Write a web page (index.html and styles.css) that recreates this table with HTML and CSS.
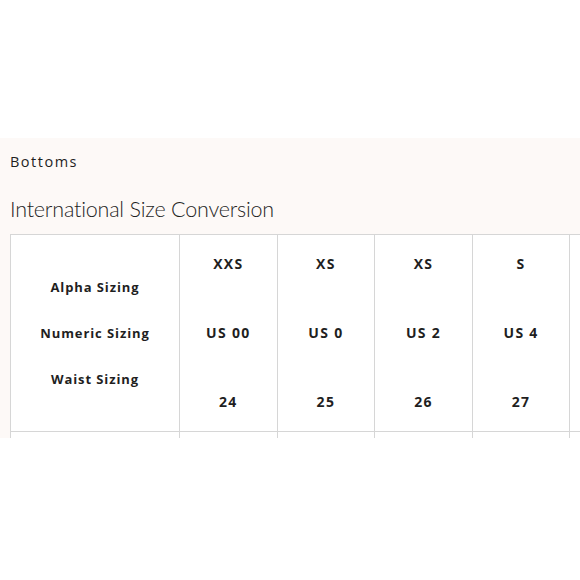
FILE: index.html
```html
<!DOCTYPE html>
<html>
<head>
<meta charset="utf-8">
<link rel="stylesheet" href="styles.css">
</head>
<body>
<div class="top"></div>
<section class="panel">
  <div class="kicker">Bottoms</div>
  <h2 class="title">International Size Conversion</h2>
  <div class="clip">
    <table class="sizes">
      <colgroup>
        <col class="c-label"><col class="c-val"><col class="c-val"><col class="c-val"><col class="c-val"><col class="c-val">
      </colgroup>
      <tr>
        <td class="labels">
          <div class="stack lbl">
            <div>Alpha Sizing</div>
            <div>Numeric Sizing</div>
            <div>Waist Sizing</div>
          </div>
        </td>
        <td><div class="stack val"><div>XXS</div><div>US 00</div><div>24</div></div></td>
        <td><div class="stack val"><div>XS</div><div>US 0</div><div>25</div></div></td>
        <td><div class="stack val"><div>XS</div><div>US 2</div><div>26</div></div></td>
        <td><div class="stack val"><div>S</div><div>US 4</div><div>27</div></div></td>
        <td></td>
      </tr>
      <tr class="next">
        <td></td><td></td><td></td><td></td><td></td><td></td>
      </tr>
    </table>
  </div>
</section>
</body>
</html>
```
FILE: styles.css
```css
html, body {
  margin: 0;
  padding: 0;
  background: #ffffff;
  width: 580px;
  overflow: hidden;
}
.top {
  height: 138px;
}
.panel {
  background: #fdf9f7;
  padding: 0 0 0 10px;
  height: 300px;
  overflow: hidden;
  color: #1f1f1f;
}
.kicker {
  font-family: "Open Sans", sans-serif;
  font-size: 14.5px;
  letter-spacing: 1.5px;
  padding-top: 15px;
  line-height: 18px;
  font-weight: 400;
}
.title {
  font-family: "Lato", sans-serif;
  font-weight: 300;
  font-size: 21.5px;
  margin: 26px 0 0 0;
  line-height: 24px;
  letter-spacing: -0.2px;
}
.clip {
  margin-top: 13px;
}
.sizes {
  border-collapse: collapse;
  table-layout: fixed;
  width: 657px;
  background: #ffffff;
  font-family: "Open Sans", sans-serif;
  font-weight: 700;
  font-size: 13px;
  letter-spacing: 0.9px;
  color: #1f1f1f;
}
.c-label {
  width: 169px;
}
.c-val {
  width: 97.6px;
}
.sizes td {
  border: 1px solid #d6d6d6;
  padding: 0;
  text-align: center;
  vertical-align: middle;
}
.labels {
  height: 196px;
}
.stack {
  display: flex;
  flex-direction: column;
}
.stack div {
  height: 20px;
  line-height: 20px;
}
.lbl {
  gap: 26px;
}
.val {
  gap: 49px;
  font-size: 14px;
  letter-spacing: 1.3px;
}
.next td {
  height: 40px;
}
```
